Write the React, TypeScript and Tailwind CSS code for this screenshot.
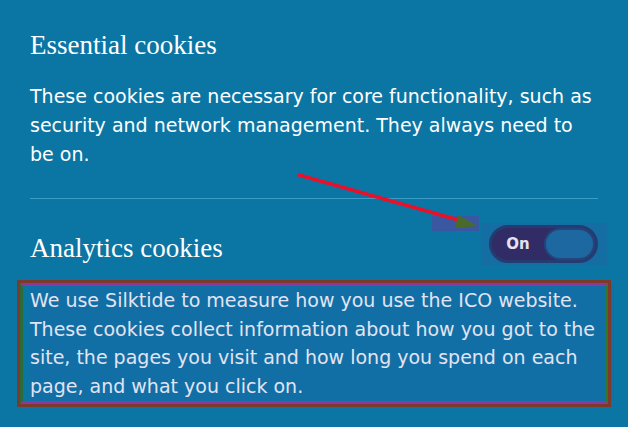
const serif = { fontFamily: '"Liberation Serif", Georgia, serif' };
const sans = { fontFamily: '"DejaVu Sans", Verdana, sans-serif' };

export default function App() {
  return (
    <div className="relative h-[427px] w-[628px] overflow-hidden bg-[#0b76a4] text-white">
      <div className="px-[30px] pt-[29px]">
        <h2 className="text-[27px] leading-[32px] font-normal" style={serif}>
          Essential cookies
        </h2>
        <p className="mt-[21px] text-[19px] leading-[29px]" style={sans}>
          These cookies are necessary for core functionality, such as security and network management. They always need to be on.
        </p>

        <div className="mt-[29px] h-px w-full bg-[#3b9cc8]" />

        <div className="mt-[25px] flex items-center justify-between">
          <h2 className="pt-[8px] text-[27px] leading-[32px] font-normal" style={serif}>
            Analytics cookies
          </h2>
          <button className="flex h-[38px] w-[109px] items-center rounded-full border-[3px] border-[#1f3d68] bg-[#2e2a5c] p-0">
            <span className="w-[52px] text-center text-[15px] font-bold text-white" style={sans}>
              On
            </span>
            <span className="h-[32px] flex-1 rounded-full border-[2px] border-[#1d4777] bg-[#1670a2]" />
          </button>
        </div>

        <p className="mt-[22px] text-[19px] leading-[28.5px]" style={sans}>
          We use Silktide to measure how you use the ICO website. These cookies collect information about how you got to the site, the pages you visit and how long you spend on each page, and what you click on.
        </p>
      </div>

      {/* annotation overlays */}
      <div className="pointer-events-none absolute left-[30px] top-[285px] h-[116px] w-[584px] bg-[#3a4ab0]/15" />
      <div className="pointer-events-none absolute left-[17px] top-[280px] h-[127px] w-[594px] border-[3px] border-[#7b3a2c]">
        <div className="h-full w-full border-[3px] border-[#8a3a9e] border-l-[#2f6a3a] border-r-[#2f7a2a]" />
      </div>
      <div className="pointer-events-none absolute left-[481px] top-[223px] h-[42px] w-[126px] bg-[#4a3aa0]/15" />
      <div className="pointer-events-none absolute left-[432px] top-[216px] h-[15px] w-[47px] bg-[#6a3aa0]/50" />

      <svg className="pointer-events-none absolute left-0 top-0" width="628" height="427">
        <line x1="299" y1="175" x2="462" y2="221" stroke="#e8102a" strokeWidth="3.5" strokeLinecap="round" />
        <polygon points="478,226 458,215 455,228" fill="#4a6a2a" />
      </svg>
    </div>
  );
}
